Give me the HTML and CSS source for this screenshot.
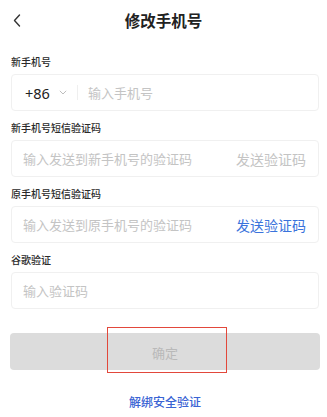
FILE: index.html
```html
<!DOCTYPE html>
<html lang="zh">
<head>
<meta charset="utf-8">
<title>修改手机号</title>
<link rel="stylesheet" href="styles.css">
</head>
<body>
<header class="header">
  <span class="back">
    <svg width="8" height="13" viewBox="0 0 8 13"><path d="M6.5 1 L1.5 6.5 L6.5 12" fill="none" stroke="#333" stroke-width="1.4" stroke-linecap="round" stroke-linejoin="round"/></svg>
  </span>
  <h1 class="title">修改手机号</h1>
  <span></span>
</header>
<main class="form">
  <div class="field">
    <div class="label">新手机号</div>
    <div class="box">
      <span class="code">+86</span>
      <svg class="chev" width="8" height="5" viewBox="0 0 8 5"><path d="M0.8 0.8 L4 4 L7.2 0.8" fill="none" stroke="#b5b5b5" stroke-width="0.9"/></svg>
      <span class="divider"></span>
      <span class="ph">输入手机号</span>
    </div>
  </div>
  <div class="field">
    <div class="label">新手机号短信验证码</div>
    <div class="box">
      <span class="ph grow">输入发送到新手机号的验证码</span>
      <span class="send disabled">发送验证码</span>
    </div>
  </div>
  <div class="field">
    <div class="label">原手机号短信验证码</div>
    <div class="box">
      <span class="ph grow">输入发送到原手机号的验证码</span>
      <span class="send">发送验证码</span>
    </div>
  </div>
  <div class="field">
    <div class="label">谷歌验证</div>
    <div class="box">
      <span class="ph grow">输入验证码</span>
    </div>
  </div>
  <div class="btn-wrap">
    <div class="btn">确定</div>
    <div class="highlight"></div>
  </div>
  <div class="link">解绑安全验证</div>
</main>
</body>
</html>
```
FILE: styles.css
```css
* { box-sizing: border-box; }
html, body {
  margin: 0;
  padding: 0;
  background: #ffffff;
  font-family: "Noto Sans CJK SC", "Noto Sans", sans-serif;
  color: #222;
}
.header {
  height: 40px;
  display: grid;
  grid-template-columns: 40px 1fr 40px;
  align-items: center;
}
.back {
  display: flex;
  padding-left: 13px;
  padding-top: 1px;
}
.title {
  margin: 0;
  text-align: center;
  font-size: 15.5px;
  font-weight: 700;
  color: #222;
  line-height: 20px;
}
.form {
  padding: 0 8px 0 11px;
}
.field {
  margin-top: 15px;
}
.field + .field {
  margin-top: 10px;
}
.label {
  font-size: 10px;
  line-height: 14px;
  font-weight: 500;
  color: #2a2a2a;
  margin-bottom: 5px;
}
.box {
  height: 37px;
  border: 1px solid #f0f0f0;
  border-radius: 4px;
  display: flex;
  align-items: center;
  padding: 0 12px 0 11px;
}
.code {
  font-family: "Noto Sans", sans-serif;
  font-size: 14.5px;
  color: #222;
  margin-left: 2px;
}
.chev {
  margin-left: 9px;
}
.divider {
  width: 1px;
  height: 15px;
  background: #efefef;
  margin: 0 10px 0 10px;
}
.ph {
  font-size: 13px;
  color: #c4c4c4;
}
.grow {
  flex: 1;
}
.send {
  font-size: 14px;
  color: #3a73dc;
}
.send.disabled {
  color: #c4c4c4;
}
.btn-wrap {
  position: relative;
  margin: 24px -1px 0 -1px;
}
.btn {
  height: 37px;
  border-radius: 4px;
  background: #dcdcdc;
  color: #b9b9b9;
  font-size: 13px;
  display: flex;
  align-items: center;
  justify-content: center;
  padding-top: 2px;
}
.highlight {
  position: absolute;
  left: 97px;
  top: -6px;
  width: 120px;
  height: 46px;
  border: 1.5px solid #e2483b;
}
.link {
  margin-top: 25px;
  text-align: center;
  font-size: 12px;
  line-height: 14px;
  font-weight: 500;
  color: #3a64d4;
}
```
